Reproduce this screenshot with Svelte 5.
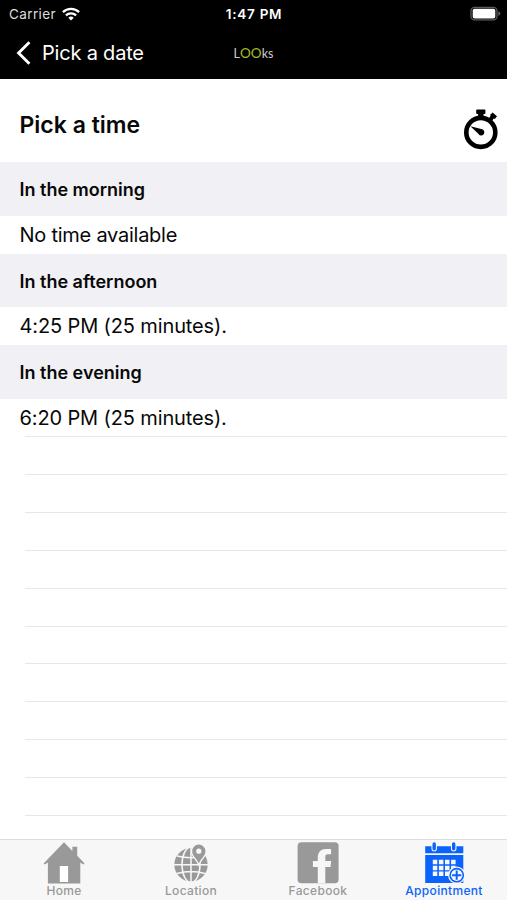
<script lang="ts">
	interface Section {
		title: string;
		slot: string;
	}

	const sections: Section[] = [
		{ title: "In the morning", slot: "No time available" },
		{ title: "In the afternoon", slot: "4:25 PM (25 minutes)." },
		{ title: "In the evening", slot: "6:20 PM (25 minutes)." },
	];

	const tabs = ["Home", "Location", "Facebook", "Appointment"];
	const emptyRows = 11;

	let activeTab = $state("Appointment");
</script>

<div class="app">
	<header>
		<div class="status">
			<div class="carrier">
				<span>Carrier</span>
				<svg width="18" height="14" viewBox="0 0 18 14" fill="none" stroke="#fff" stroke-width="2.3">
					<path d="M.9 5.2a11.7 11.7 0 0 1 16.2 0" />
					<path d="M3.9 8.4a7.4 7.4 0 0 1 10.2 0" />
					<path d="M9 13.4 6.3 10.7a3.9 3.9 0 0 1 5.4 0z" fill="#fff" stroke="none" />
				</svg>
			</div>
			<span class="clock">1:47 PM</span>
			<svg class="battery" width="31" height="16" viewBox="0 0 31 16">
				<rect x="1" y="1.3" width="26" height="12.6" rx="3.6" fill="none" stroke="#5c5c5c" stroke-width="1.3" />
				<rect x="2.7" y="2.7" width="22.6" height="9.8" rx="1.8" fill="#fff" />
				<path d="M28.4 5.2q2 1 2 2.4t-2 2.4z" fill="#666" />
			</svg>
		</div>
		<nav>
			<button class="back">
				<svg width="16" height="24" viewBox="0 0 16 24" fill="none" stroke="#fff" stroke-width="2.9">
					<path d="M14.4 1.3 3.6 12l10.8 10.7" />
				</svg>
				<span>Pick a date</span>
			</button>
			<div class="logo">L<b>OO</b>ks</div>
		</nav>
	</header>

	<main>
		<div class="title">
			<h1>Pick a time</h1>
			<svg width="36" height="41" viewBox="0 0 36 41">
				<circle cx="17.8" cy="23.4" r="14.5" fill="none" stroke="#000" stroke-width="4.6" />
				<path d="M13.2 1.3q0-.8.8-.8h7.6q.8 0 .8.8v3q0 .8-.8.8h-1.1v4h-5.4v-4H14q-.8 0-.8-.8z" />
				<path d="m25.5 9.8 2.2-3-.7-.8 2.6-2.4 4.4 3.6-2.2 2.8-1-.6-2.2 2.8z" />
				<path d="m7.4 17.2 11.8 3.1a3.2 3.2 0 1 1-3.9 4.5z" />
			</svg>
		</div>

		{#each sections as section}
			<h2>{section.title}</h2>
			<div class="row">{section.slot}</div>
		{/each}

		<div class="blank">
			{#each { length: emptyRows } as _}
				<div class="line"></div>
			{/each}
		</div>
	</main>

	<footer>
		{#each tabs as tab}
			<button
				class={{ tab, active: activeTab === tab }}
				onclick={() => (activeTab = tab)}
			>
				<svg width="44" height="44" viewBox="0 0 44 44" fill="currentColor">
					{#if tab === "Home"}
						<path d="M22 2.3 1.6 23.4l1.2 1.2 3.1-2.2v21.1h32.4V22.4l3 2.2 1.3-1.2-7.4-7.6V6.7h-4.8v4.4z" />
						<path d="M17.8 26h8.3v16h-8.3z" fill="#fff" />
					{:else if tab === "Location"}
						<circle cx="22" cy="24.7" r="16.7" />
						<g fill="none" stroke="#f7f7f7" stroke-width="1.5">
							<path d="M22 7v36M5 24.7h34M8 16q14 3.6 28 0M8 33.4q14-3.6 28 0" />
							<ellipse cx="22" cy="24.7" rx="9" ry="17.7" />
						</g>
						<path
							d="M29.8 23.4C27.6 18.4 23.2 15.8 23.2 11.2a6.6 6.6 0 0 1 13.2 0c0 4.6-4.4 7.2-6.6 12.2z"
							stroke="#f7f7f7"
							stroke-width="2.6"
							paint-order="stroke"
						/>
						<circle cx="29.8" cy="11.2" r="2.6" fill="#f7f7f7" />
					{:else if tab === "Facebook"}
						<rect x="1.6" y="2.2" width="41" height="41" rx="3.8" />
						<path d="M21.8 43.2V27h-4.9v-6h4.9v-3.4c0-5.7 3-8.7 8.4-8.7h4.9v5.4h-3.2c-2 0-2.6 1-2.6 2.8V21h5.9l-.7 6h-5.2v16.2z" fill="#f7f7f7" />
					{:else}
						<path d="M3.2 6.2h38.1v7H3.2zM3.2 15h38.1v28H3.2z" />
						<g fill="none" stroke="#f7f7f7" stroke-width="5.5" stroke-linecap="round">
							<path d="M12.2 4.5v4.2M31.7 4.5v4.2" />
							<path d="M12.2 4v4.7M31.7 4v4.7" stroke="currentColor" stroke-width="3.4" />
						</g>
						<path
							d="M10.8 22.1h22.8M10.8 27.9h22.8M10.8 33.7h22.8"
							fill="none"
							stroke="#f7f7f7"
							stroke-width="4.5"
							stroke-dasharray="4.5 1.6"
						/>
						<circle cx="34.7" cy="35.2" r="8.6" fill="#f7f7f7" />
						<circle cx="34.7" cy="35.2" r="6.6" fill="currentColor" stroke="currentColor" stroke-width="1.6" />
						<circle cx="34.7" cy="35.2" r="5.8" fill="#f7f7f7" />
						<path d="M34.7 30.6v9.2M30.1 35.2h9.2" stroke="currentColor" stroke-width="2" />
					{/if}
				</svg>
				<span>{tab}</span>
			</button>
		{/each}
	</footer>
</div>

<style>
	:global(body) {
		background: #fff;
		overflow: hidden;
	}

	.app {
		height: 900px;
		display: flex;
		flex-direction: column;
		font-family: Inter, "Liberation Sans", sans-serif;
		color: #080808;
	}

	button {
		border: 0;
		padding: 0;
		background: none;
		font: inherit;
		color: inherit;
	}

	header {
		height: 79px;
		flex-shrink: 0;
		background: #000;
		color: #fff;
	}

	.status,
	nav {
		display: grid;
		grid-template-columns: 1fr auto 1fr;
		align-items: center;
	}

	.status {
		height: 27px;
		padding: 0 6px 0 9px;
		font-size: 13.5px;
	}

	.carrier {
		display: flex;
		align-items: center;
		gap: 6px;
		color: #ddd;
		letter-spacing: 0.38px;
	}

	.clock {
		font-weight: 600;
		letter-spacing: 0.75px;
		margin-right: 2px;
	}

	.battery {
		justify-self: end;
	}

	nav {
		height: 51px;
		padding: 0 15px;
	}

	.back {
		display: flex;
		align-items: center;
		gap: 11px;
		font-size: 20px;
		letter-spacing: -0.2px;
	}

	.logo {
		font: 12.5px Lato, sans-serif;
		color: #ccc;
	}

	.logo b {
		font-weight: 400;
		font-size: 13.5px;
		color: #a9bd22;
	}

	main {
		flex: 1;
		min-height: 0;
		overflow: hidden;
	}

	.title {
		height: 83px;
		padding: 0 8px 0 19.5px;
		display: flex;
		align-items: center;
		justify-content: space-between;
	}

	.title svg {
		margin-top: 18px;
	}

	h1 {
		margin: 8px 0 0;
		font-size: 23px;
		font-weight: 600;
	}

	h2 {
		height: 53.8px;
		margin: 0;
		padding-left: 19.5px;
		background: #f1f0f5;
		font-size: 18px;
		font-weight: 600;
		line-height: 55px;
	}

	.row {
		height: 37.9px;
		padding-left: 19.5px;
		font-size: 20px;
		line-height: 38.4px;
		letter-spacing: -0.13px;
	}

	.row:nth-of-type(2) {
		letter-spacing: -0.25px;
	}

	.blank {
		margin: -1px 0 0 25px;
	}

	.line {
		height: 37.9px;
		box-sizing: border-box;
		border-top: 1px solid #e7e7e8;
	}

	footer {
		height: 61px;
		box-sizing: border-box;
		flex-shrink: 0;
		display: flex;
		border-top: 1px solid #dcdcdc;
		background: #f7f7f7;
	}

	.tab {
		flex: 1;
		display: flex;
		flex-direction: column;
		align-items: center;
		padding-left: 1px;
		color: #999;
		font-size: 12px;
		font-weight: 500;
		line-height: 14px;
		letter-spacing: 0.32px;
	}

	.active {
		padding-left: 0;
		color: #0b63fb;
	}
</style>
